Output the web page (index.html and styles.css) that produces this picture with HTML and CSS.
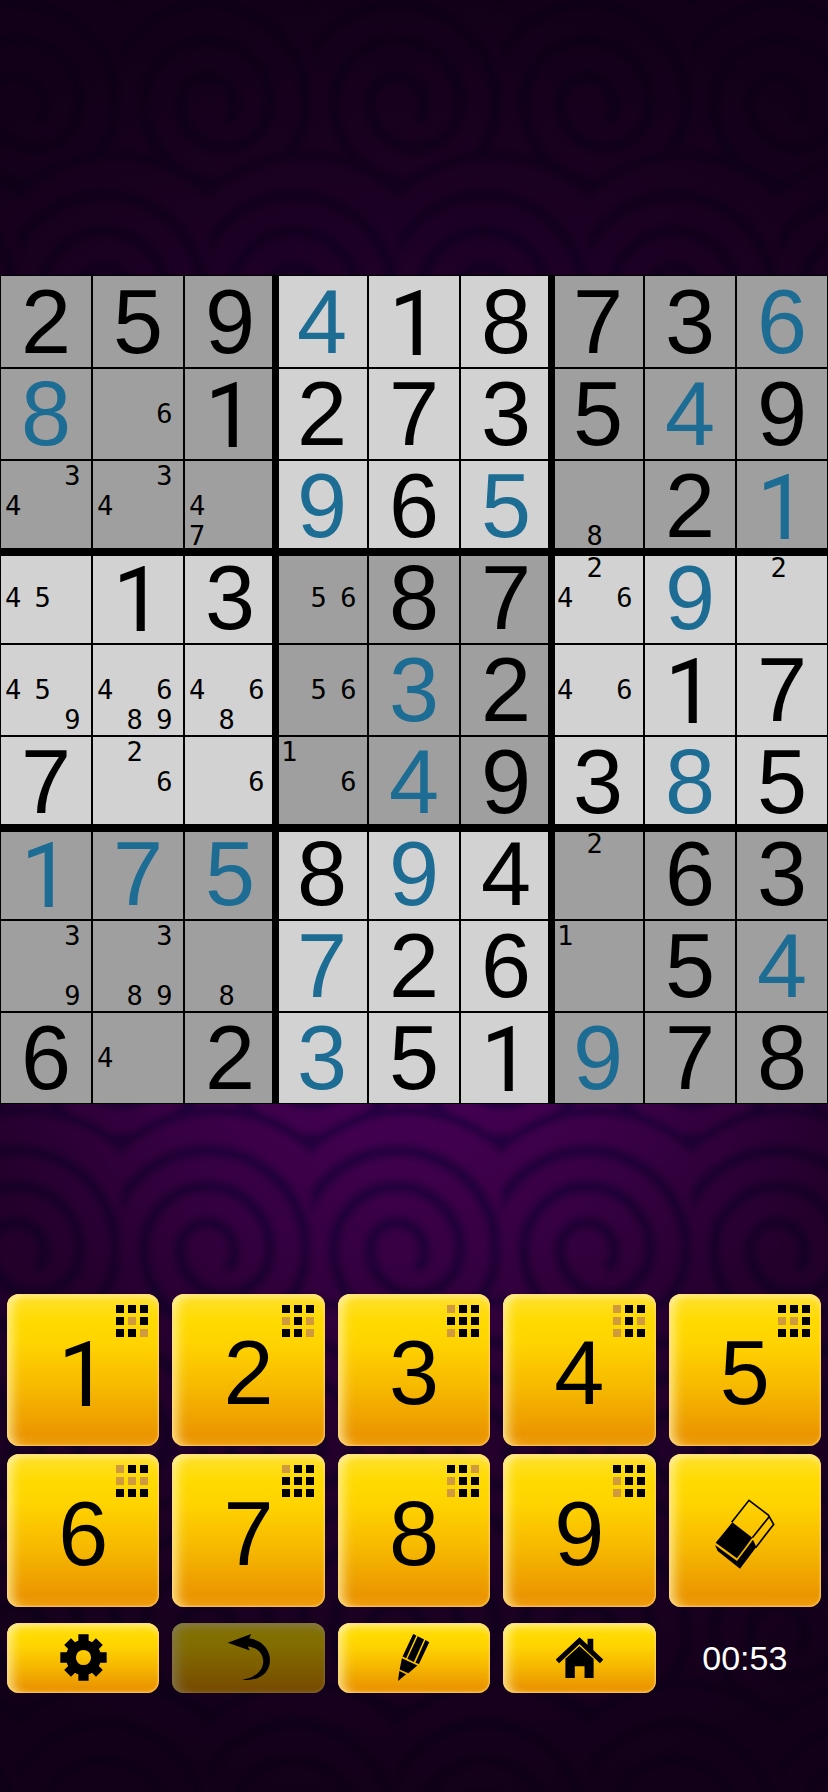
FILE: index.html
```html
<!DOCTYPE html>
<html lang="en">
<head>
<meta charset="utf-8">
<meta name="viewport" content="width=device-width, initial-scale=1">
<title>Sudoku</title>
<link rel="stylesheet" href="styles.css">
</head>
<body>
<svg class="backdrop" viewBox="0 0 828 1792" preserveAspectRatio="xMidYMid slice" aria-hidden="true">
  <defs>
    <clipPath id="column"><rect x="-95" y="-150" width="190" height="300"/></clipPath>
    <g id="swirl" clip-path="url(#column)">
      <circle r="144" fill="#2c0048"/>
      <circle r="134" fill="#480058"/>
      <path d="M14 16Q20 8 18 0A27 27 0 0 0 -36 0A45 45 0 0 0 54 0A63 63 0 0 0 -72 0A81 81 0 0 0 90 0A99 99 0 0 0 -108 0A117 117 0 0 0 126 0" fill="none" stroke="#2c0048" stroke-width="13" stroke-linecap="round"/>
    </g>
    <pattern id="waves" x="311" y="0" width="190" height="382" patternUnits="userSpaceOnUse">
      <rect width="190" height="382" fill="#2c0048"/>
      <use href="#swirl" x="-8" y="-88"/><use href="#swirl" x="182" y="-88"/>
      <use href="#swirl" x="95" y="103"/>
      <use href="#swirl" x="-8" y="294"/><use href="#swirl" x="182" y="294"/>
      <use href="#swirl" x="95" y="485"/>
    </pattern>
    <radialGradient id="shade" gradientUnits="userSpaceOnUse" cx="0" cy="0" r="1" gradientTransform="translate(414 900) scale(800 900)">
      <stop offset="0" stop-color="#08000c" stop-opacity="0"/>
      <stop offset=".26" stop-color="#08000c" stop-opacity=".12"/>
      <stop offset=".42" stop-color="#08000c" stop-opacity=".32"/>
      <stop offset=".6" stop-color="#08000c" stop-opacity=".58"/>
      <stop offset=".75" stop-color="#08000c" stop-opacity=".68"/>
      <stop offset="1" stop-color="#08000c" stop-opacity=".84"/>
    </radialGradient>
    <filter id="soft"><feGaussianBlur stdDeviation="3"/></filter>
  </defs>
  <rect x="-20" y="-20" width="868" height="1832" fill="url(#waves)" filter="url(#soft)"/>
  <rect width="828" height="1792" fill="url(#shade)"/>
</svg>

<main class="game">
  <section class="board" aria-label="Sudoku board">
    <div class="row">
      <div class="cell">2</div><div class="cell">5</div><div class="cell">9</div>
      <div class="cell mine">4</div><div class="cell one">1</div><div class="cell">8</div>
      <div class="cell">7</div><div class="cell">3</div><div class="cell mine">6</div>
    </div>
    <div class="row">
      <div class="cell mine">8</div><div class="cell notes"><span class="n6">6</span></div><div class="cell one">1</div>
      <div class="cell">2</div><div class="cell">7</div><div class="cell">3</div>
      <div class="cell">5</div><div class="cell mine">4</div><div class="cell">9</div>
    </div>
    <div class="row">
      <div class="cell notes"><span class="n3">3</span><span class="n4">4</span></div><div class="cell notes"><span class="n3">3</span><span class="n4">4</span></div><div class="cell notes"><span class="n4">4</span><span class="n7">7</span></div>
      <div class="cell mine">9</div><div class="cell">6</div><div class="cell mine">5</div>
      <div class="cell notes"><span class="n8">8</span></div><div class="cell">2</div><div class="cell mine one">1</div>
    </div>
    <div class="row middle">
      <div class="cell notes"><span class="n4">4</span><span class="n5">5</span></div><div class="cell one">1</div><div class="cell">3</div>
      <div class="cell notes"><span class="n5">5</span><span class="n6">6</span></div><div class="cell">8</div><div class="cell">7</div>
      <div class="cell notes"><span class="n2">2</span><span class="n4">4</span><span class="n6">6</span></div><div class="cell mine">9</div><div class="cell notes"><span class="n2">2</span></div>
    </div>
    <div class="row middle">
      <div class="cell notes"><span class="n4">4</span><span class="n5">5</span><span class="n9">9</span></div><div class="cell notes"><span class="n4">4</span><span class="n6">6</span><span class="n8">8</span><span class="n9">9</span></div><div class="cell notes"><span class="n4">4</span><span class="n6">6</span><span class="n8">8</span></div>
      <div class="cell notes"><span class="n5">5</span><span class="n6">6</span></div><div class="cell mine">3</div><div class="cell">2</div>
      <div class="cell notes"><span class="n4">4</span><span class="n6">6</span></div><div class="cell one">1</div><div class="cell">7</div>
    </div>
    <div class="row middle">
      <div class="cell">7</div><div class="cell notes"><span class="n2">2</span><span class="n6">6</span></div><div class="cell notes"><span class="n6">6</span></div>
      <div class="cell notes"><span class="n1">1</span><span class="n6">6</span></div><div class="cell mine">4</div><div class="cell">9</div>
      <div class="cell">3</div><div class="cell mine">8</div><div class="cell">5</div>
    </div>
    <div class="row">
      <div class="cell mine one">1</div><div class="cell mine">7</div><div class="cell mine">5</div>
      <div class="cell">8</div><div class="cell mine">9</div><div class="cell">4</div>
      <div class="cell notes"><span class="n2">2</span></div><div class="cell">6</div><div class="cell">3</div>
    </div>
    <div class="row">
      <div class="cell notes"><span class="n3">3</span><span class="n9">9</span></div><div class="cell notes"><span class="n3">3</span><span class="n8">8</span><span class="n9">9</span></div><div class="cell notes"><span class="n8">8</span></div>
      <div class="cell mine">7</div><div class="cell">2</div><div class="cell">6</div>
      <div class="cell notes"><span class="n1">1</span></div><div class="cell">5</div><div class="cell mine">4</div>
    </div>
    <div class="row">
      <div class="cell">6</div><div class="cell notes"><span class="n4">4</span></div><div class="cell">2</div>
      <div class="cell mine">3</div><div class="cell">5</div><div class="cell one">1</div>
      <div class="cell mine">9</div><div class="cell">7</div><div class="cell">8</div>
    </div>
  </section>

  <section class="keypad" aria-label="Number pad">
    <button class="key one" type="button">1<span class="count"><i></i><i></i><i></i><i></i><i class="off"></i><i></i><i></i><i></i><i class="off"></i></span></button>
    <button class="key" type="button">2<span class="count"><i></i><i></i><i></i><i class="off"></i><i></i><i class="off"></i><i></i><i></i><i class="off"></i></span></button>
    <button class="key" type="button">3<span class="count"><i class="off"></i><i></i><i></i><i></i><i></i><i></i><i class="off"></i><i></i><i></i></span></button>
    <button class="key" type="button">4<span class="count"><i class="off"></i><i></i><i></i><i class="off"></i><i></i><i class="off"></i><i class="off"></i><i></i><i></i></span></button>
    <button class="key" type="button">5<span class="count"><i></i><i></i><i></i><i class="off"></i><i class="off"></i><i></i><i></i><i></i><i></i></span></button>
    <button class="key" type="button">6<span class="count"><i class="off"></i><i></i><i></i><i class="off"></i><i class="off"></i><i class="off"></i><i></i><i></i><i></i></span></button>
    <button class="key" type="button">7<span class="count"><i class="off"></i><i></i><i></i><i></i><i></i><i></i><i></i><i></i><i></i></span></button>
    <button class="key" type="button">8<span class="count"><i></i><i></i><i class="off"></i><i class="off"></i><i></i><i></i><i class="off"></i><i></i><i></i></span></button>
    <button class="key" type="button">9<span class="count"><i></i><i></i><i></i><i class="off"></i><i></i><i></i><i class="off"></i><i></i><i></i></span></button>
    <button class="key" type="button" aria-label="Erase">
      <svg class="eraser" viewBox="0 0 180 210" aria-hidden="true">
        <path d="M50 70L102 4L160 48L176 76L122 146M112 116L162 54" fill="none" stroke="#000" stroke-width="5"/>
        <path d="M52 70L112 116L66 178L2 131Z"/>
        <path d="M0 138L66 186L114 122L124 144L75 209L8 156Z"/>
      </svg>
    </button>
  </section>

  <section class="toolbar" aria-label="Game controls">
    <button class="tool" type="button" aria-label="Settings">
      <svg class="icon" viewBox="-71 -71 142 142" aria-hidden="true">
        <g fill="none" stroke="#000">
          <circle r="38" stroke-width="30"/>
          <path stroke-width="31" d="M0 -70V-40M0 70V40M-70 0H-40M70 0H40"/>
          <path stroke-width="29" d="M-48 -48L-30 -30M48 48L30 30M48 -48L30 -30M-48 48L-30 30"/>
        </g>
      </svg>
    </button>
    <button class="tool" type="button" aria-label="Undo" disabled>
      <svg class="icon" viewBox="0 0 140 140" aria-hidden="true">
        <path d="M8 26L78 0L72 13C112 18 134 48 134 78C134 116 100 142 52 136C90 130 112 110 114 84C115 60 98 40 68 37L74 49Z"/>
      </svg>
    </button>
    <button class="tool" type="button" aria-label="Notes">
      <svg class="icon" viewBox="0 0 140 146" aria-hidden="true">
        <path d="M69 0L79 5L47 75L36 70ZM83 7L103 17L71 87L51 77ZM107 19L119 26L87 93L76 89ZM34 75L82 98L54 122L27 110ZM26 115L47 125L22 146Z"/>
      </svg>
    </button>
    <button class="tool" type="button" aria-label="Home">
      <svg class="icon" viewBox="0 0 140 140" aria-hidden="true">
        <path d="M4 82L70 20L136 82" fill="none" stroke="#000" stroke-width="15"/>
        <path d="M94 14H111V52L94 36ZM70 36L112 74V131H85V96H56V131H28V74Z"/>
      </svg>
    </button>
    <time class="timer">00:53</time>
  </section>
</main>
</body>
</html>
```

FILE: styles.css
```css
* {
  box-sizing: border-box;
}

body {
  margin: 0;
  min-height: 100vh;
  position: relative;
  overflow-x: hidden;
  background: #10001a;
  font-family: "Liberation Sans", Arial, sans-serif;
}

.backdrop {
  position: absolute;
  inset: 0;
  width: 100%;
  height: 100%;
}

.game {
  position: relative;
  display: flex;
  flex-direction: column;
  padding: 275px 0 100px;
}

/* Board */

.board {
  border-top: 1px solid #000;
}

.row {
  display: grid;
  grid-template-columns: repeat(9, minmax(0, 1fr));
  --top: 1px;
  --bottom: 1px;
}

.row:first-child {
  --top: 0px;
}

.row:nth-child(3n):not(:last-child) {
  --bottom: 4px;
}

.row:nth-child(3n + 1):not(:first-child) {
  --top: 4px;
}

.cell {
  --left: 1px;
  --right: 1px;
  aspect-ratio: 1;
  display: grid;
  place-items: center;
  background: #9f9f9f;
  box-shadow:
    inset var(--left) 0 #000,
    inset calc(0px - var(--right)) 0 #000,
    inset 0 var(--top) #000,
    inset 0 calc(0px - var(--bottom)) #000;
  color: #000;
  font-size: 90px;
  line-height: 84px;
}

.cell:nth-child(3n):not(:last-child) {
  --right: 4px;
}

.cell:nth-child(3n + 1):not(:first-child) {
  --left: 3px;
}

.row:not(.middle) .cell:nth-child(n + 4):nth-child(-n + 6),
.middle .cell:nth-child(-n + 3),
.middle .cell:nth-child(n + 7) {
  background: #d2d2d2;
}

.mine {
  color: #1c6c93;
}

.notes {
  grid-template-columns: 34% 34% auto;
  grid-template-rows: repeat(3, minmax(0, 1fr));
  place-items: center start;
  padding: 1px 0 1px 5px;
  font-family: "DejaVu Sans Mono", monospace;
  font-size: 27px;
  line-height: 30px;
}

.n1 { grid-area: 1 / 1; }
.n2 { grid-area: 1 / 2; }
.n3 { grid-area: 1 / 3; }
.n4 { grid-area: 2 / 1; }
.n5 { grid-area: 2 / 2; }
.n6 { grid-area: 2 / 3; }
.n7 { grid-area: 3 / 1; }
.n8 { grid-area: 3 / 2; }
.n9 { grid-area: 3 / 3; }

/* Number pad and controls */

.keypad,
.toolbar {
  display: grid;
  grid-template-columns: repeat(5, minmax(0, 1fr));
  gap: 8px 13px;
  padding: 0 7px;
}

.keypad {
  margin-top: 190px;
}

.toolbar {
  margin-top: 16px;
}

.key,
.tool {
  position: relative;
  display: grid;
  place-items: center;
  padding: 0;
  border: 0;
  border-radius: 12px;
  background: linear-gradient(#ffe030, #ffda00 18%, #ffd400 32%, #f6b800 62%, #eb9600 92%, #ee9c10);
  box-shadow:
    inset 0 0 2px 1px rgba(255, 214, 120, 0.75),
    inset 0 6px 6px -3px rgba(255, 248, 190, 0.65),
    inset 13px 0 12px -8px rgba(255, 248, 190, 0.75);
  color: #000;
}

.key {
  aspect-ratio: 1;
  padding-top: 6px;
  font: 90px/100px "Liberation Sans", Arial, sans-serif;
}

.tool {
  height: 70px;
}

.tool:disabled {
  filter: brightness(0.51);
}

/* A plain-stemmed figure one, whose font sits higher on its line */
.one {
  font-family: Roboto, "Liberation Sans", sans-serif;
}

.cell.one {
  padding-top: 6px;
}

.key.one {
  padding-top: 12px;
}

.count {
  position: absolute;
  top: 11px;
  right: 11px;
  display: grid;
  grid-template-columns: repeat(3, 8px);
  grid-auto-rows: 8px;
  gap: 4px;
}

.count i {
  background: #000;
}

.count .off {
  background: #d09a3e;
}

.eraser {
  width: 60px;
  height: 70px;
}

.icon {
  width: 47px;
  height: 47px;
}

.timer {
  align-self: center;
  justify-self: center;
  color: #fff;
  font-size: 34px;
  line-height: 40px;
}
```
